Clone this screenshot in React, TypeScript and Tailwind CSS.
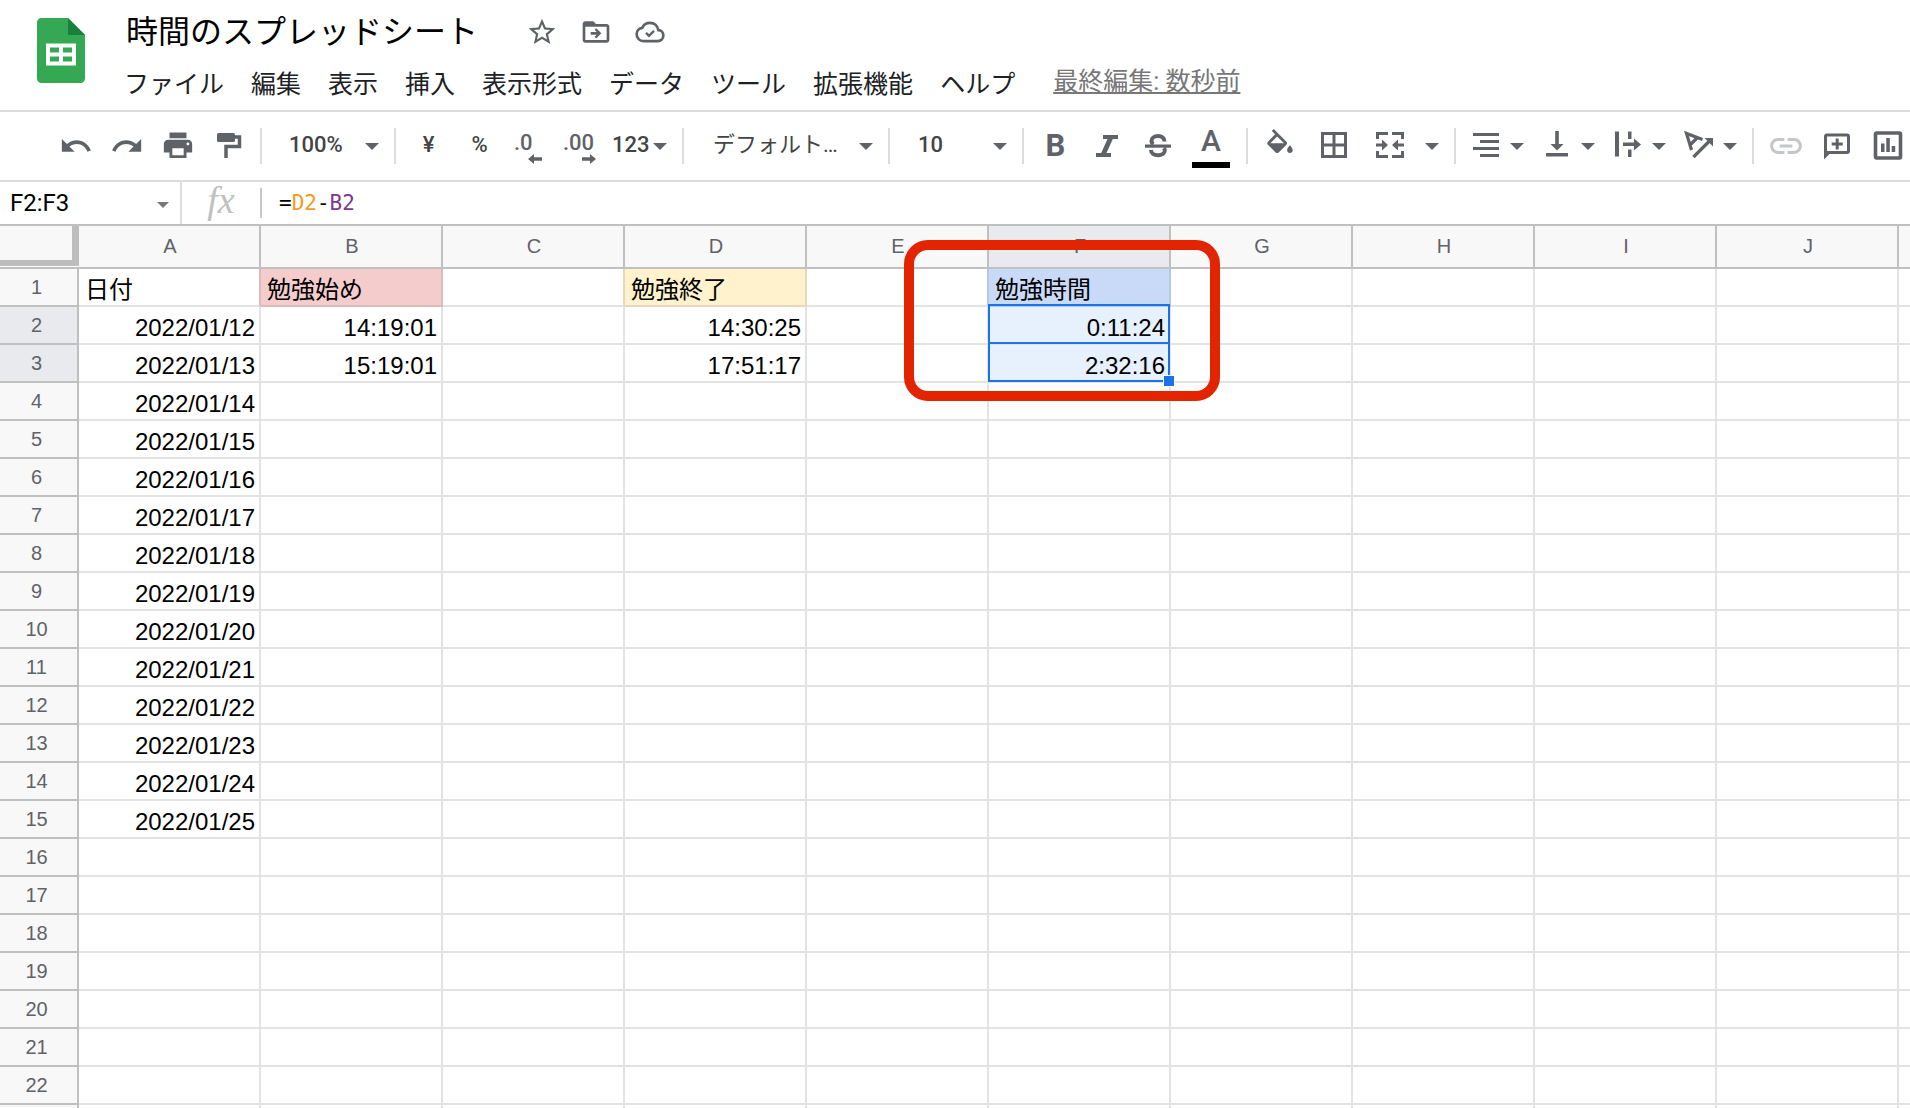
import React, { useState } from "react";

const MENUS = ["ファイル", "編集", "表示", "挿入", "表示形式", "データ", "ツール", "拡張機能", "ヘルプ"];
const COLUMNS = ["A", "B", "C", "D", "E", "F", "G", "H", "I", "J", ""];
const LABELLED_ROWS = 22;
const ROWS = Array.from({ length: LABELLED_ROWS + 1 }, (_, i) => i + 1);

const CELLS: Record<string, string> = {
  A1: "日付",
  B1: "勉強始め",
  D1: "勉強終了",
  F1: "勉強時間",
  B2: "14:19:01",
  B3: "15:19:01",
  D2: "14:30:25",
  D3: "17:51:17",
  F2: "0:11:24",
  F3: "2:32:16",
};
for (let i = 0; i < 14; i++) CELLS[`A${i + 2}`] = `2022/01/${12 + i}`;

const FILLS: Record<string, string> = {
  A1: "border-b-[#e2e3e3] border-r-[#deb9b9]",
  B1: "bg-[#f4cccc] border-[#deb9b9]",
  C1: "border-b-[#e2e3e3] border-r-[#e6d9b8]",
  D1: "bg-[#fff2cc] border-[#e6d9b8]",
  E1: "border-b-[#e2e3e3] border-r-[#b7c6e2]",
  F1: "bg-[#c9daf8] border-[#b7c6e2]",
  F2: "z-10 bg-[#e7f0fd] border-[#e2e3e3]",
  F3: "z-10 bg-[#e7f0fd] border-[#e2e3e3]",
};

function Icon({ children, size = "size-[34px]", box = "0 0 34 34" }: { children: React.ReactNode; size?: string; box?: string }) {
  return (
    <svg viewBox={box} className={`${size} shrink-0`} fill="currentColor" aria-hidden="true">
      {children}
    </svg>
  );
}

function Arrow({ className = "" }: { className?: string }) {
  return (
    <svg viewBox="0 0 14 7" className={`h-[7px] w-[14px] shrink-0 ${className}`} fill="currentColor" aria-hidden="true">
      <path d="M0 0h14L7 7z" />
    </svg>
  );
}

function Tool({ label, children, width = "w-[51px]" }: { label: string; children: React.ReactNode; width?: string }) {
  return (
    <button type="button" aria-label={label} className={`relative flex h-12 shrink-0 items-center justify-center ${width}`}>
      {children}
    </button>
  );
}

function SplitTool({ label, children }: { label: string; children: React.ReactNode }) {
  return (
    <button type="button" aria-label={label} className="flex h-12 w-[71px] shrink-0 items-center">
      <span className="flex w-12 justify-center">{children}</span>
      <Arrow />
    </button>
  );
}

function Divider() {
  return <div className="h-9 w-[2px] shrink-0 bg-[#dadce0]" />;
}

function Picker({ label, value, width, text }: { label: string; value: string; width: string; text: string }) {
  return (
    <div className={`relative shrink-0 ${width}`}>
      <select aria-label={label} defaultValue={value} className={`h-10 w-full appearance-none bg-transparent pr-10 pb-1 text-[22px] outline-none ${text}`}>
        <option>{value}</option>
      </select>
      <Arrow className="pointer-events-none absolute top-[17px] right-[15px] text-[#5f6368]" />
    </div>
  );
}

function Header() {
  const [title, setTitle] = useState("時間のスプレッドシート");
  return (
    <header className="flex h-[110px] shrink-0 items-start pl-[37px]">
      <svg viewBox="0 0 48 65" className="mt-[18px] h-[65px] w-12 shrink-0" aria-label="スプレッドシート">
        <path d="M4.500 0H31L48 17V60.500a4.500 4.500 0 0 1-4.500 4.500h-39A4.500 4.500 0 0 1 0 60.500v-56A4.500 4.500 0 0 1 4.500 0z" fill="#34a853" />
        <path d="M31 0l17 17H31z" fill="#188038" />
        <path fillRule="evenodd" d="M9 25.500h30v22H9zM13 29.500v5h9v-5zM26 29.500v5h9v-5zM13 38.500v5h9v-5zM26 38.500v5h9v-5z" fill="#fff" />
      </svg>
      <div className="ml-[39px] flex min-w-0 flex-col">
        <div className="flex h-[60px] items-center pt-1">
          <input
            aria-label="名前の変更"
            value={title}
            onChange={(e) => setTitle(e.target.value)}
            className="h-12 w-[391px] bg-transparent pl-[2px] text-[32px] text-black outline-none"
          />
          <div className="flex text-[#5f6368]">
            <Tool label="スター" width="w-[54px]">
              <Icon size="size-8" box="0 0 24 24">
                <path d="M22 9.240l-7.190-.62L12 2 9.190 8.630 2 9.240l5.460 4.730L5.820 21 12 17.270 18.180 21l-1.630-7.030L22 9.240zM12 15.400l-3.760 2.270 1-4.280-3.320-2.880 4.380-.38L12 6.100l1.710 4.040 4.380.38-3.320 2.880 1 4.280L12 15.400z" />
              </Icon>
            </Tool>
            <Tool label="移動" width="w-[54px]">
              <Icon size="size-8" box="0 0 24 24">
                <path d="M20 6h-8l-2-2H4c-1.100 0-2 .9-2 2v12c0 1.100.9 2 2 2h16c1.100 0 2-.9 2-2V8c0-1.100-.9-2-2-2zm0 12H4V8h16v10z" />
                <path d="M12.200 9.200l-1.200 1.200 1.500 1.600H8v2h4.500L11 15.600l1.200 1.200L16 13z" />
              </Icon>
            </Tool>
            <Tool label="ドキュメントのステータス" width="w-[54px]">
              <Icon size="size-8" box="0 0 24 24">
                <path
                  d="M18.300 10.600C17.700 7.300 15.200 5.200 12 5.200c-2.600 0-4.800 1.400-5.800 3.700C3.700 9.200 2 11.200 2 13.700 2 16.500 4.200 18.800 7 18.800h10.900c2.300 0 4.100-1.800 4.100-4.100s-1.600-4-3.700-4.100z"
                  fill="none"
                  stroke="currentColor"
                  strokeWidth="2"
                />
                <path d="M9 12.700l2.200 2.200 3.800-3.800" fill="none" stroke="currentColor" strokeWidth="1.800" />
              </Icon>
            </Tool>
          </div>
        </div>
        <nav className="flex h-[50px] items-center gap-[27px] text-[25px] text-[#202124]">
          {MENUS.map((m) => (
            <button key={m} type="button" className="shrink-0 whitespace-nowrap">
              {m}
            </button>
          ))}
          <a href="#history" className="ml-[11px] pb-[6px] whitespace-nowrap text-[#777] underline underline-offset-2">
            最終編集: 数秒前
          </a>
        </nav>
      </div>
    </header>
  );
}

function Toolbar() {
  return (
    <div role="toolbar" aria-label="メイン" className="flex h-[72px] shrink-0 items-center overflow-hidden border-y-2 border-[#dadce0] pl-[50px] text-[#5f6368]">
      <Tool label="元に戻す">
        <Icon box="0 0 24 24">
          <path d="M12.500 8c-2.650 0-5.050.99-6.900 2.600L2 7v9h9l-3.620-3.620c1.390-1.160 3.160-1.880 5.120-1.880 3.540 0 6.550 2.310 7.600 5.500l2.370-.78C21.080 11.030 17.150 8 12.500 8z" />
        </Icon>
      </Tool>
      <Tool label="やり直し">
        <Icon box="0 0 24 24">
          <path d="M18.400 10.600C16.550 8.990 14.150 8 11.500 8c-4.650 0-8.580 3.030-9.960 7.220L3.900 16c1.050-3.190 4.050-5.500 7.600-5.500 1.950 0 3.730.72 5.120 1.880L13 16h9V7l-3.600 3.600z" />
        </Icon>
      </Tool>
      <Tool label="印刷">
        <Icon box="0 0.500 24 24">
          <path d="M19 8H5c-1.660 0-3 1.340-3 3v6h4v4h12v-4h4v-6c0-1.660-1.340-3-3-3zm-3 11H8v-5h8v5zm3-7c-.55 0-1-.45-1-1s.45-1 1-1 1 .45 1 1-.45 1-1 1zm-1-9H6v4h12V3z" />
        </Icon>
      </Tool>
      <Tool label="書式を貼り付け">
        <Icon>
          <rect x="5" y="4" width="18" height="9" rx="1.500" />
          <path d="M23 8h4.500v9.500H14V29" fill="none" stroke="currentColor" strokeWidth="3.500" />
        </Icon>
      </Tool>
      <div className="w-[6px] shrink-0" />
      <Divider />
      <Picker label="ズーム" value="100%" width="w-[132px]" text="pl-[27px] font-medium text-[#444]" />
      <Divider />
      <div className="flex shrink-0 px-[7px] text-[22px] font-medium text-[#444]">
        <Tool label="通貨の表示形式">
          <span className="pb-1">¥</span>
        </Tool>
        <Tool label="パーセントの表示形式">
          <span className="pb-1">%</span>
        </Tool>
        <button type="button" aria-label="小数点以下の桁数を減らす" className="relative h-12 w-[51px] pb-2 pl-[9px] text-left text-[#5f6368]">
          .0
          <svg viewBox="0 0 14 10" className="absolute top-8 left-[23px] h-[10px] w-[14px]" fill="currentColor">
            <path d="M0 5l6-5v3.200h8v3.600H6V10z" />
          </svg>
        </button>
        <button type="button" aria-label="小数点以下の桁数を増やす" className="relative h-12 w-[51px] pb-2 pl-[7px] text-left text-[#5f6368]">
          .00
          <svg viewBox="0 0 14 10" className="absolute top-8 left-[26px] h-[10px] w-[14px]" fill="currentColor">
            <path d="M14 5L8 0v3.200H0v3.600h8V10z" />
          </svg>
        </button>
        <button type="button" aria-label="表示形式の詳細設定" className="flex h-12 w-[68px] items-center gap-[3px] pl-[5px]">
          <span className="pb-1">123</span>
          <Arrow className="text-[#5f6368]" />
        </button>
      </div>
      <Divider />
      <Picker label="フォント" value="デフォルト…" width="w-[204px]" text="pl-[29px] text-[#444]" />
      <Divider />
      <Picker label="フォントサイズ" value="10" width="w-[132px]" text="pl-[28px] font-medium text-[#444]" />
      <Divider />
      <div className="flex shrink-0 px-[6px]">
        <Tool label="太字">
          <span className="pt-px text-[31px] font-bold">B</span>
        </Tool>
        <Tool label="斜体">
          <Icon>
            <path d="M13 6h15v4h-5.200l-6.300 14H21v4H6v-4h5.200l6.300-14H13z" />
          </Icon>
        </Tool>
        <Tool label="取り消し線">
          <Icon>
            <g fill="none" stroke="currentColor" strokeWidth="4">
              <path d="M23.500 12.500c0-3.500-3-5.500-6.500-5.500s-6.500 2-6.500 5c0 1.500.8 2.600 2 3.200" />
              <path d="M10 21c0 3.300 3 5.200 7 5.200s6.800-1.800 6.800-4.600c0-1-.3-1.800-1-2.600" />
            </g>
            <rect x="4" y="15.500" width="26" height="3.200" />
          </Icon>
        </Tool>
        <Tool label="テキストの色" width="w-14">
          <span className="pb-[10px] text-[30px] leading-none font-medium">A</span>
          <span className="absolute top-10 left-[9px] h-[6px] w-[38px] bg-black" />
        </Tool>
      </div>
      <div className="w-px shrink-0" />
      <Divider />
      <div className="flex shrink-0 pr-2 pl-[5px]">
        <Tool label="塗りつぶしの色" width="w-[54px]">
          <Icon box="0 0 24 24">
            <path d="M16.560 8.940L7.620 0 6.210 1.410l2.380 2.380-5.150 5.150c-.59.59-.59 1.540 0 2.120l5.500 5.500c.29.29.68.44 1.060.44s.77-.15 1.060-.44l5.500-5.500c.59-.58.59-1.530 0-2.120zM5.210 10L10 5.210 14.790 10H5.210zM19 11.500s-2 2.170-2 3.500c0 1.100.9 2 2 2s2-.9 2-2c0-1.330-2-3.500-2-3.500z" />
          </Icon>
        </Tool>
        <Tool label="枠線" width="w-[54px]">
          <Icon>
            <path d="M5.500 4.500h23v23h-23zM17 4.500v23M5.500 16h23" fill="none" stroke="currentColor" strokeWidth="3" />
          </Icon>
        </Tool>
        <Tool label="セルを結合" width="w-[57px]">
          <Icon>
            <path d="M4.500 10V4.500H15M19 4.500h10.500V10M4.500 22v5.500H15M19 27.500h10.500V22M3 16h7M31 16h-7" fill="none" stroke="currentColor" strokeWidth="3" />
            <path d="M9 10.500l6 5.500-6 5.500zM25 10.500L19 16l6 5.500z" />
          </Icon>
        </Tool>
        <Tool label="結合の種類を選択" width="w-[28px]">
          <Arrow />
        </Tool>
      </div>
      <Divider />
      <div className="flex shrink-0 px-[6px]">
        <SplitTool label="水平方向の配置">
          <Icon>
            <path d="M4 4h26v3H4zM11 11h19v3H11zM4 18h26v3H4zM11 25h19v3H11z" />
          </Icon>
        </SplitTool>
        <SplitTool label="垂直方向の配置">
          <Icon>
            <path d="M6 24h22v3.500H6zM15.200 2h3.600v13h4.700L17 21.500 10.500 15h4.700z" />
          </Icon>
        </SplitTool>
        <SplitTool label="テキストを折り返す">
          <Icon>
            <path d="M4 2.500h4v25H4zM17 2.500h3.500V10H17zM17 20.500h3.500V28H17zM12 13.500h11v-4l7 6-7 6v-4.500H12z" />
          </Icon>
        </SplitTool>
        <SplitTool label="テキストの回転">
          <Icon>
            <path d="M20.500 10.500L4.500 4.500 9.500 21M15.500 8.500L8 16M11.500 28L27 12.500" fill="none" stroke="currentColor" strokeWidth="3.200" />
            <path d="M22.500 9H31v8.500z" />
          </Icon>
        </SplitTool>
      </div>
      <Divider />
      <div className="flex shrink-0 pl-[7px]">
        <button type="button" aria-label="リンクを挿入" className="flex h-12 w-[50px] items-center justify-center text-[#c4c6c8]">
          <Icon size="size-[38px]" box="0 0 24 24">
            <path d="M3.900 12c0-1.710 1.390-3.100 3.100-3.100h4V7H7c-2.760 0-5 2.240-5 5s2.240 5 5 5h4v-1.900H7c-1.710 0-3.100-1.390-3.100-3.100zM8 13h8v-2H8v2zm9-6h-4v1.900h4c1.710 0 3.100 1.390 3.100 3.100s-1.390 3.100-3.100 3.100h-4V17h4c2.760 0 5-2.240 5-5s-2.240-5-5-5z" />
          </Icon>
        </button>
        <Tool label="コメントを挿入">
          <Icon>
            <rect x="5.500" y="6" width="23" height="17.500" rx="1.500" fill="none" stroke="currentColor" strokeWidth="3" />
            <path d="M4 21v9.500l6-6zM15.700 9.500h3v4h4v3h-4v4h-3v-4h-4v-3h4z" />
          </Icon>
        </Tool>
        <Tool label="グラフを挿入">
          <Icon>
            <rect x="4.500" y="4" width="25" height="25" rx="1" fill="none" stroke="currentColor" strokeWidth="3.600" />
            <path d="M10 14.500h3.500V23H10zM15.300 9h3.500v14h-3.500zM20.700 17h3.500v6h-3.500z" />
          </Icon>
        </Tool>
      </div>
    </div>
  );
}

function FormulaBar() {
  const [range, setRange] = useState("F2:F3");
  return (
    <div className="flex h-[44px] shrink-0 items-center border-b-2 border-[#c0c0c0]">
      <input
        aria-label="名前ボックス"
        value={range}
        onChange={(e) => setRange(e.target.value)}
        className="h-10 w-[157px] bg-transparent pb-px pl-[10px] text-[24px] text-black outline-none"
      />
      <svg viewBox="0 0 12 6" className="mt-1 mr-[11px] h-[6px] w-3 shrink-0" fill="#777">
        <path d="M0 0h12L6 6z" />
      </svg>
      <div className="h-full w-[2px] shrink-0 bg-[#dadce0]" />
      <span className="flex w-[78px] shrink-0 justify-center pb-[7px] font-['Liberation_Serif',serif] text-[38px] leading-none text-[#c0c0c0] italic">fx</span>
      <div className="h-[30px] w-[2px] shrink-0 bg-[#c8c8c8]" />
      <div
        role="textbox"
        aria-label="数式バー"
        tabIndex={0}
        className="min-w-0 flex-1 pl-[17px] font-['DejaVu_Sans_Mono',monospace] text-[21px] leading-none text-black"
      >
        =<span className="text-[#f7981d]">D2</span>-<span className="text-[#7e3794]">B2</span>
      </div>
    </div>
  );
}

function Grid() {
  return (
    <main className="relative min-h-0 flex-1 overflow-hidden">
      <table className="w-full table-fixed border-separate border-spacing-0 font-['Liberation_Sans','Noto_Sans_CJK_JP',sans-serif]">
        <colgroup>
          <col className="w-[79px]" />
          {COLUMNS.map((c) => (
            <col key={c} className={c ? "w-[182px]" : "w-auto"} />
          ))}
        </colgroup>
        <thead>
          <tr className="h-[43px]">
            <td className="border-b-2 border-[#c0c0c0] bg-white p-0 pb-px align-top">
              <div className="h-10 border-r-[7px] border-b-[6px] border-[#bcbdbc] bg-[#f8f8f8]" />
            </td>
            {COLUMNS.map((c) => (
              <th
                key={c}
                scope="col"
                className={`border-b-2 border-[#c0c0c0] p-0 pb-[2px] pl-[2px] text-[20px] leading-6 font-normal text-[#5f6368] ${c ? "border-r-2" : ""} ${c === "F" ? "bg-[#e8eaed]" : "bg-[#f8f8f8]"}`}
              >
                {c}
              </th>
            ))}
          </tr>
        </thead>
        <tbody>
          {ROWS.map((r) => (
            <tr key={r} className="h-[38px]">
              <th
                scope="row"
                className={`border-r-2 border-b-2 border-[#c0c0c0] p-0 pr-1 text-[20px] leading-6 font-normal text-[#5f6368] ${r === 2 || r === 3 ? "bg-[#e8eaed]" : "bg-[#f8f8f8]"}`}
              >
                {r <= LABELLED_ROWS && r}
              </th>
              {COLUMNS.map((c) => {
                const id = `${c}${r}`;
                const selected = id === "F2" || id === "F3";
                return (
                  <td
                    key={c}
                    className={`relative border-b-2 p-0 pt-[6px] text-[24px] leading-6 whitespace-nowrap text-black ${c ? "border-r-2" : ""} ${r === 1 ? "pl-[6px] text-left" : "pr-1 text-right"} ${FILLS[id] ?? "border-[#e2e3e3]"}`}
                  >
                    {CELLS[id]}
                    {selected && <span className="pointer-events-none absolute -top-[3px] -right-px -bottom-px -left-px border-2 border-[#1a73e8]" />}
                    {id === "F3" && <span className="absolute -right-[6px] -bottom-[6px] size-3 border border-white bg-[#1a73e8]" />}
                  </td>
                );
              })}
            </tr>
          ))}
        </tbody>
      </table>
      <div className="pointer-events-none absolute top-[14px] left-[904px] z-20 h-[161px] w-[316px] rounded-[24px] border-[10px] border-[#e22400]" />
    </main>
  );
}

export default function App() {
  return (
    <div className="flex h-screen flex-col overflow-hidden bg-white font-['Roboto','Noto_Sans_CJK_JP',sans-serif]">
      <Header />
      <Toolbar />
      <FormulaBar />
      <Grid />
    </div>
  );
}
